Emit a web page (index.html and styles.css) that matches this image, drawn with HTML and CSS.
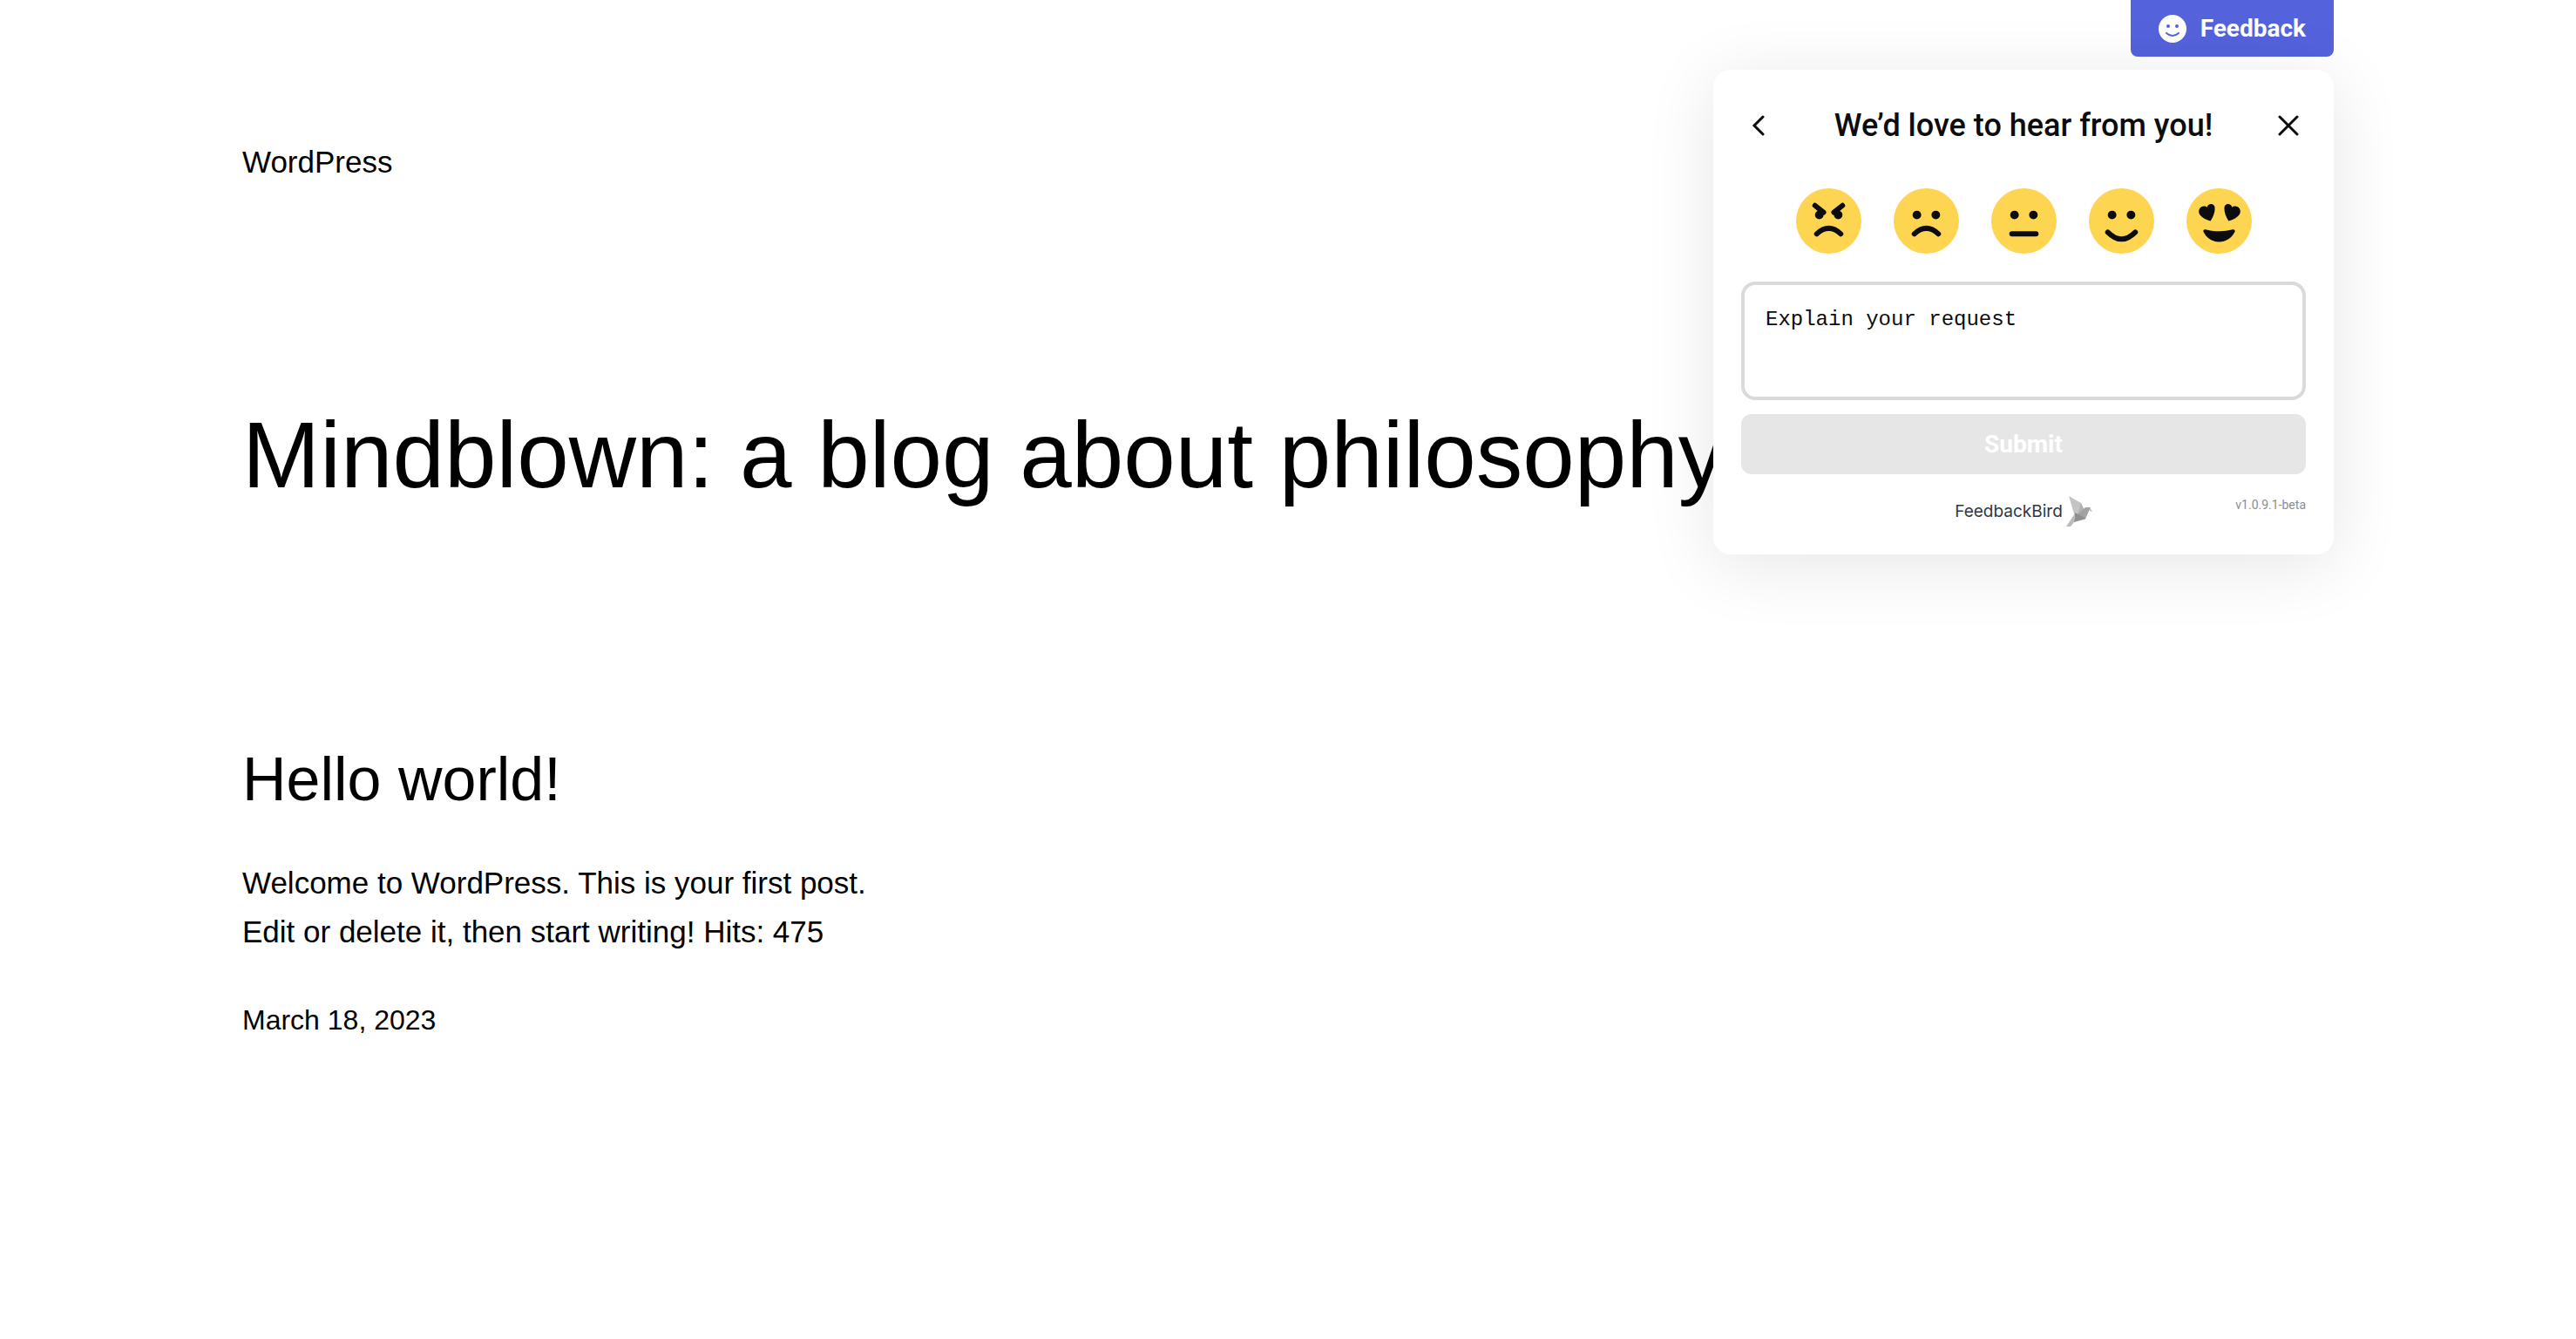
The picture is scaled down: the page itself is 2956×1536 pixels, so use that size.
FILE: index.html
```html
<!DOCTYPE html>
<html lang="en">
<head>
<meta charset="utf-8">
<meta name="viewport" content="width=device-width, initial-scale=1">
<title>WordPress</title>
<link rel="stylesheet" href="styles.css">
</head>
<body>
<div class="page">
  <header class="site-header"><a class="site-title" href="#">WordPress</a></header>
  <main>
    <h1 class="page-title">Mindblown: a blog about philosophy.</h1>
    <div class="posts">
      <article class="post">
        <h2 class="post-title"><a href="#">Hello world!</a></h2>
        <p class="post-excerpt">Welcome to WordPress. This is your first post. Edit or delete it, then start writing! Hits: 475</p>
        <a class="post-date" href="#"><time datetime="2023-03-18">March 18, 2023</time></a>
      </article>
    </div>
  </main>

  <aside class="widget" aria-label="Feedback">
    <button class="widget-tab" type="button">
      <svg class="tab-icon" viewBox="0 0 32 32" aria-hidden="true">
        <circle cx="16" cy="16" r="16" fill="#fff"/>
        <circle cx="11" cy="13" r="2" fill="#5462dc"/>
        <circle cx="21" cy="13" r="2" fill="#5462dc"/>
        <path d="M9 21q7 6 14 0" fill="none" stroke="#5462dc" stroke-width="2" stroke-linecap="round"/>
      </svg>
      Feedback
    </button>
    <form class="card">
      <div class="card-head">
        <button class="icon-button" type="button" aria-label="Back">
          <svg class="icon" viewBox="0 0 24 24"><path d="M17 2 7 12l10 10"/></svg>
        </button>
        <h2 class="card-title">We’d love to hear from you!</h2>
        <button class="icon-button" type="button" aria-label="Close">
          <svg class="icon" viewBox="0 0 24 24"><path d="M2 2l20 20M22 2 2 22"/></svg>
        </button>
      </div>
      <div class="ratings">
        <button class="rating" type="button" aria-label="Angry">
          <svg class="face" viewBox="0 0 76 76"><circle class="skin" cx="38" cy="38" r="38"/>
            <circle cx="27" cy="31" r="5"/><circle cx="49" cy="31" r="5"/>
            <path class="line" d="M22 20l10 8M54 20l-10 8M24 53q14-13 28 0"/></svg>
        </button>
        <button class="rating" type="button" aria-label="Sad">
          <svg class="face" viewBox="0 0 76 76"><circle class="skin" cx="38" cy="38" r="38"/>
            <circle cx="27" cy="31" r="5"/><circle cx="49" cy="31" r="5"/>
            <path class="line" d="M24 53q14-13 28 0"/></svg>
        </button>
        <button class="rating" type="button" aria-label="Neutral">
          <svg class="face" viewBox="0 0 76 76"><circle class="skin" cx="38" cy="38" r="38"/>
            <circle cx="27" cy="31" r="5"/><circle cx="49" cy="31" r="5"/>
            <path class="line" d="M24 53h28"/></svg>
        </button>
        <button class="rating" type="button" aria-label="Happy">
          <svg class="face" viewBox="0 0 76 76"><circle class="skin" cx="38" cy="38" r="38"/>
            <circle cx="27" cy="31" r="5"/><circle cx="49" cy="31" r="5"/>
            <path class="line" d="M22 51q16 16 32 0"/></svg>
        </button>
        <button class="rating" type="button" aria-label="Love">
          <svg class="face" viewBox="0 0 76 76"><circle class="skin" cx="38" cy="38" r="38"/>
            <path d="M28 38C20 36 12 31 15 24c2-4 7-4 9-2 1-5 9-5 9 1 0 6-2 10-5 15zM49 38c8-2 16-7 13-14-2-4-7-4-9-2-1-5-9-5-9 1 0 6 2 10 5 15z"/>
            <path d="M22 48q16 4 32 0c2 0 3 1 2 3-7 15-29 15-36 0-1-2 0-3 2-3z"/></svg>
        </button>
      </div>
      <textarea class="message" aria-label="Explain your request" placeholder="Explain your request"></textarea>
      <button class="submit" type="submit" disabled>Submit</button>
      <div class="card-foot">
        <a class="brand" href="#">FeedbackBird
          <svg class="bird" viewBox="0 0 30 36" aria-hidden="true">
            <path fill="#c4c4c4" d="M3 0l14 8 4 9-10 10z"/>
            <path fill="#b3b3b3" d="M17 8l4 9-10 10 4-12z"/>
            <path fill="#a2a2a2" d="M22 13h6l-6 13-11-3z"/>
            <path fill="#bdbdbd" d="M27 13l3 5-3-1z"/>
            <path fill="#8f8f8f" d="M10 19l13 7-14 4z"/>
            <path fill="#bababa" d="M10 20l-1 10-4 5H0z"/>
          </svg>
        </a>
        <span class="version">v1.0.9.1-beta</span>
      </div>
    </form>
  </aside>
</div>
</body>
</html>
```
FILE: styles.css
```css
* { box-sizing: border-box; }

body {
  margin: 0;
  background: #fff;
  color: #000;
  font-family: "Liberation Sans", Arial, sans-serif;
  font-size: 35px;
  line-height: 56px;
}

a { color: inherit; text-decoration: none; }
h1, h2, p { margin: 0; font-weight: 400; }
button { border: 0; padding: 0; font: inherit; cursor: pointer; }

.page {
  position: relative;
  max-width: 2400px;
  margin: 0 auto;
  padding-top: 158px;
}

.site-header { display: flex; }

.page-title {
  margin-top: 242px;
  font-size: 107px;
  line-height: 132px;
}

.posts {
  display: grid;
  grid-template-columns: repeat(3, 1fr);
  gap: 48px;
  margin-top: 260px;
}

.post-title { font-size: 70px; line-height: 92px; }
.post-excerpt { margin-top: 45px; }
.post-date { display: block; margin-top: 47px; font-size: 32px; line-height: 52px; }

/* Feedback widget, floating over the page */
.widget {
  position: absolute;
  top: 0;
  right: 0;
  width: 712px;
  display: flex;
  flex-direction: column;
  align-items: flex-end;
  gap: 15px;
  color: #0c0c0e;
  font-family: Roboto, sans-serif;
}

.widget-tab {
  display: flex;
  align-items: center;
  gap: 16px;
  height: 65px;
  padding: 0 32px;
  border-radius: 0 0 8px 8px;
  background: #5462dc;
  color: #fff;
  font-size: 28px;
  font-weight: 700;
}

.tab-icon { width: 32px; height: 32px; }

.card {
  width: 100%;
  padding: 32px;
  border-radius: 20px;
  background: #fff;
  box-shadow: 0 12px 80px rgba(0, 0, 0, 0.1);
}

.card-head {
  display: flex;
  align-items: center;
  justify-content: space-between;
  height: 64px;
}

.card-title { font-size: 36px; font-weight: 500; line-height: 48px; }

.icon-button {
  display: flex;
  align-items: center;
  justify-content: center;
  width: 40px;
  height: 40px;
  background: none;
}

.icon {
  width: 24px;
  height: 24px;
  fill: none;
  stroke: #0c0c0e;
  stroke-width: 3;
  stroke-linecap: round;
}

.ratings {
  display: flex;
  justify-content: center;
  gap: 37px;
  margin-top: 40px;
}

.rating { display: flex; background: none; }
.face { width: 75px; height: 75px; fill: #0c0c0e; }
.skin { fill: #fed550; }
.line { fill: none; stroke: #0c0c0e; stroke-width: 6; stroke-linecap: round; }

.message {
  display: block;
  width: 100%;
  height: 136px;
  margin-top: 32px;
  padding: 24px;
  border: 4px solid #dadada;
  border-radius: 16px;
  background: #fff;
  color: #0c0c0e;
  font-family: Courier, "Liberation Mono", monospace;
  font-size: 24px;
  line-height: 32px;
  resize: none;
}

.message::placeholder { color: #0c0c0e; opacity: 1; }

.submit {
  display: block;
  width: 100%;
  height: 69px;
  margin-top: 16px;
  border-radius: 12px;
  background: #e6e6e6;
  color: #fff;
  font-size: 28px;
  font-weight: 700;
}

.card-foot {
  display: grid;
  grid-template-columns: 1fr auto 1fr;
  margin-top: 25px;
  height: 35px;
}

.brand {
  grid-column: 2;
  display: flex;
  align-items: center;
  color: #2d3748;
  font-family: Inter, sans-serif;
  font-size: 19px;
  line-height: 36px;
}

.bird { width: 30px; height: 36px; margin-left: 4px; }

.version {
  justify-self: end;
  color: #8c8c8c;
  font-size: 14px;
  line-height: 20px;
}
```
